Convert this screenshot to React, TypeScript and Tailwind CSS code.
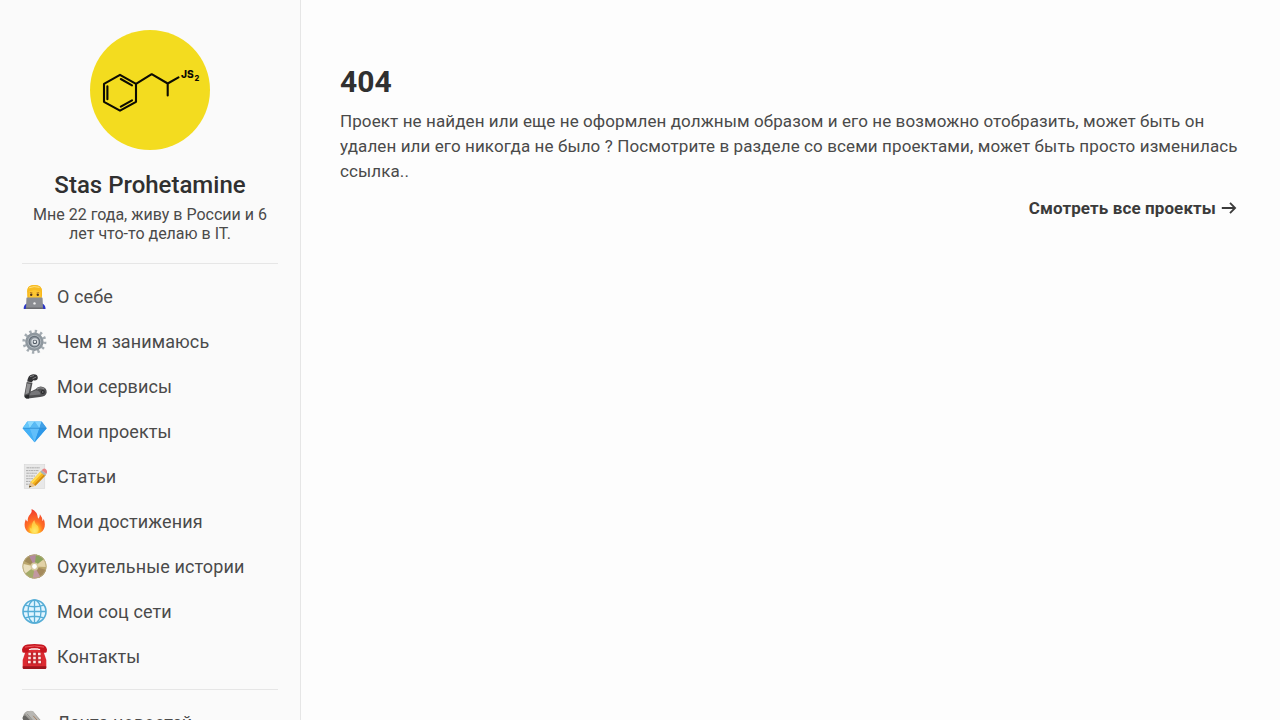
import React from "react";

const Developer = () => (
  <svg viewBox="0 0 25 25" className="size-[25px] shrink-0">
    <path d="M1.7 25 Q1.5 20.5 5 19.5 H20 Q23.5 20.5 23.6 25Z" fill="#2a35c8" />
    <path d="M5.2 9 Q4.8 2 10 1.2 Q19.8 -.2 20 7 V12 Q20 18 12.5 18 Q5.2 18 5.2 12Z" fill="#f9b81a" />
    <path d="M6.8 7 Q10 7 12 5.6 Q15 7 18.6 7 V15 H6.8Z" fill="#fdc733" />
    <path d="M5.2 8 Q4.8 2 10 1.2 Q19.8 -.2 20 7.6 L18.8 8 Q18 5.8 15 5.8 Q9 6.6 7.2 5.6 L6.3 8.6Z" fill="#f7bc23" />
    <path d="M7 3.8 Q12 1.6 17.5 3.4" fill="none" stroke="#ffe07a" strokeWidth="1" />
    <path d="M7.8 8.4 L10.4 8.8 M14.6 8.8 L17.2 8.4" stroke="#b5711a" strokeWidth=".8" />
    <circle cx="9.2" cy="10.7" r="1.2" fill="#54351a" /><circle cx="15.8" cy="10.7" r="1.2" fill="#54351a" />
    <path d="M5.2 13.5 H19.8 Q20.6 13.5 20.6 14.5 L21 25 H4 L4.4 14.5 Q4.4 13.5 5.2 13.5Z" fill="#8b8d92" />
    <path d="M4 23.6 H21 L21.3 25 H3.7Z" fill="#6c6d71" /><circle cx="12.5" cy="19.4" r="1.2" fill="#eee" />
  </svg>
);

const Gear = () => (
  <svg viewBox="0 0 25 25" className="size-[25px] shrink-0">
    <circle cx="12.4" cy="12.7" r="10.4" fill="none" stroke="#a3abb1" strokeWidth="3.2" strokeDasharray="2.3 3.145" />
    <circle cx="12.4" cy="12.7" r="8" fill="#b2b9bf" stroke="#8e979e" strokeWidth="2.4" />
    <circle cx="12.4" cy="12.7" r="5.3" fill="#8b949c" stroke="#66707a" strokeWidth="1.2" />
    <circle cx="12.9" cy="12.9" r="2.9" fill="#46505a" stroke="#d3d8dd" strokeWidth="1.4" />
    <circle cx="12.9" cy="12.7" r="1.3" fill="#edf0f3" />
  </svg>
);

const Arm = () => (
  <svg viewBox="0 0 25 25" className="size-[25px] shrink-0">
    <path d="M4.7 8 L10.5 8.8 L8.7 17.5 L13.5 15.3 Q16 12 20 12.7 Q25 14 24.7 18.5 Q24 22.5 18 23 L6 24.5 Q1.8 24.5 2.3 21Z" fill="#505052" />
    <path d="M5 9.5 L8.7 10 L6.7 19 L3.3 20.5Z" fill="#929294" />
    <path d="M9 18.3 L14 16.2 Q18 16.5 18.5 20.4 L7 21.5Z" fill="#77777a" />
    <path d="M15 15.2 Q18 12.8 22.4 15" fill="none" stroke="#8c8c8e" strokeWidth="1.2" />
    <path d="M5.2 7.6 Q6 1 10 .4 Q15.8 -.2 15.8 3.8 Q15.5 7 11.4 6.3 L9.7 8.3Z" fill="#333335" />
    <path d="M8 2.7 L12 1.5 M10.5 4.8 L14.3 3" stroke="#858587" strokeWidth="1" />
    <circle cx="20.8" cy="18" r="2" fill="#29292b" /><circle cx="20.8" cy="18" r=".7" fill="#999" />
    <path d="M2.5 21.8 L7.3 20.5 L7 24.4 H4Z" fill="#292a2c" />
  </svg>
);

const Diamond = () => (
  <svg viewBox="0 0 25 25" className="size-[25px] shrink-0">
    <path d="M5.3 2.4 H19.6 L24.7 9.3 L12.6 23.3 L.6 9.3Z" fill="#36a5ef" />
    <path d="M.6 9.3 L5.3 2.4 L7.7 9.3Z" fill="#65c7fb" />
    <path d="M5.3 2.4 H12.6 L7.7 9.3Z" fill="#8cdbff" />
    <path d="M12.6 2.4 L17.4 9.3 H7.7Z" fill="#59baf4" />
    <path d="M12.6 2.4 H19.6 L17.4 9.3Z" fill="#83d4ff" />
    <path d="M19.6 2.4 L24.7 9.3 H17.4Z" fill="#419fe6" />
    <path d="M.6 9.3 H7.7 L12.6 23.3Z" fill="#45b1f6" />
    <path d="M7.7 9.3 H17.4 L12.6 23.3Z" fill="#62bffa" />
    <path d="M17.4 9.3 H24.7 L12.6 23.3Z" fill="#2d97e8" />
    <path d="M1.2 9.3 H24" stroke="#2e8cd0" strokeWidth=".7" />
  </svg>
);

const Memo = () => (
  <svg viewBox="0 0 25 25" className="size-[25px] shrink-0">
    <rect x="2.2" y=".4" width="20.6" height="24.3" fill="#e8e8e8" stroke="#d3d3d3" strokeWidth=".5" />
    <path d="M4.5 3.8 H18 M4 6.6 H17 M4.4 9.2 H15 M4 12 H13 M4.2 14.7 H11 M4 17.4 H8.5 M4 20.2 H8" stroke="#9c9c9c" strokeWidth=".8" strokeDasharray="2.5 .5 1.5 .4" />
    <path d="M7 23.5 L8.6 18 L18.5 7.5 L23.6 11.2 L13.5 21.7Z" fill="#f6b51e" />
    <path d="M8.8 18 L18.5 7.6 L20.2 8.9 L10.4 19.3Z" fill="#ffdc54" />
    <path d="M13.4 21.7 L12.1 20.5 L22.3 10.2 L23.6 11.2Z" fill="#d28a14" />
    <path d="M7 23.5 L8.6 18 L13.5 21.7Z" fill="#e9c594" /><path d="M7 23.5 L7.6 21.4 L9.5 22.6Z" fill="#333" />
    <path d="M18.2 7.9 L19.7 6.3 L24.5 10 L22.9 11.7Z" fill="#abb4b9" />
    <path d="M19.7 6.3 L20.7 5.2 Q22.5 3.9 24.1 5.5 Q25.6 7.3 24.9 8.8 L24.5 10Z" fill="#e78284" />
  </svg>
);

const Fire = () => (
  <svg viewBox="0 0 25 25" className="size-[25px] shrink-0">
    <defs><radialGradient id="flame" cx=".5" cy=".88" r=".8"><stop offset="0" stopColor="#fff58a" /><stop offset=".25" stopColor="#ffbd21" /><stop offset=".5" stopColor="#ff7124" /><stop offset="1" stopColor="#f2402d" /></radialGradient></defs>
    <path d="M9.6 0 Q15.4 2.3 16.1 9.7 Q18 8.3 17.9 5.2 Q20.5 8.4 20.5 12 Q21.5 11.5 21.7 9.8 C24.5 17 22.5 24.8 12.8 24.9 C3.5 25 .7 17.5 3.8 10.2 Q4.5 12 5.7 12.5 Q5.4 8 8.2 5.3 Q10.3 3.2 9.6 0Z" fill="url(#flame)" />
    <path d="M12.3 11 Q12.8 15 16 17.2 Q18.3 23.6 12.8 24 Q7 24 7.8 18.2 Q8.6 19.6 9.7 19.8 Q9.3 14.3 12.3 11Z" fill="#ffe25c" opacity=".65" />
  </svg>
);

const Disc = () => (
  <svg viewBox="0 0 25 25" className="size-[25px] shrink-0">
    <circle cx="12.5" cy="12.5" r="12" fill="#bba66c" />
    <path d="M12.5 12.5 L2 7 Q5 1.5 10 .8Z" fill="#a08a58" />
    <path d="M12.5 12.5 L7 2 Q11 -.2 14.5 .7Z" fill="#b28a9d" />
    <path d="M12.5 12.5 L14 .6 Q20 1.5 22.8 6.4Z" fill="#8ba35c" />
    <path d="M12.5 12.5 L22 5 Q25 9 24.5 13Z" fill="#e2d2a6" />
    <path d="M12.5 12.5 L24 16 Q22 22 17 23.7Z" fill="#a48a5c" />
    <path d="M12.5 12.5 L18.5 23 Q14 25 10.3 24.3Z" fill="#c298a0" />
    <path d="M12.5 12.5 L10.8 24.4 Q5.5 23.5 3 19Z" fill="#a3ab68" />
    <path d="M12.5 12.5 L3 19.7 Q0 15 .6 9.7Z" fill="#eadfbd" />
    <circle cx="12.5" cy="12.5" r="11.6" fill="none" stroke="#b5a77a" strokeWidth=".8" />
    <circle cx="12.5" cy="12.5" r="4" fill="#d5c89e" /><circle cx="12.5" cy="12.5" r="2.4" fill="#fff" />
  </svg>
);

const Globe = () => (
  <svg viewBox="0 0 25 25" className="size-[25px] shrink-0" fill="none" stroke="#55add6">
    <circle cx="12.5" cy="12.5" r="11.5" fill="#e1f5ff" strokeWidth="1.6" />
    <path d="M12.5 1 V24 M1 12.5 H24 M3.2 6.2 Q12.5 9.3 21.8 6.2 M3.2 18.8 Q12.5 15.7 21.8 18.8" strokeWidth="1.3" />
    <ellipse cx="12.5" cy="12.5" rx="6.5" ry="11.5" strokeWidth="1.3" />
  </svg>
);

const Phone = () => (
  <svg viewBox="0 0 25 25" className="size-[25px] shrink-0">
    <path d="M4 6 H21 L24.3 16 V24 Q24 25 23 25 H2 Q.8 25 .7 24 V16Z" fill="#dc2a31" />
    <path d="M.8 22.3 H24.2 V24 Q24 25 23 25 H2 Q.8 25 .8 24Z" fill="#9e151d" />
    <path d="M0 5.4 Q1 1.2 5.5 .6 Q12.5 -.4 19.5 .6 Q24 1.2 25 5.4 L24.6 8.2 Q22 9.4 18.5 8 L18 5 Q12.5 3.7 7 5 L6.5 8 Q3 9.4 .4 8.2Z" fill="#c6151f" />
    <path d="M3 3.1 Q12.5 .8 22 3.1" stroke="#ee5b5e" strokeWidth="1" fill="none" />
    <path d="M8.8 4.3 H16.2 V6 H8.8Z" fill="#f2c3c4" />
    <path d="M6.2 8 H18.8 L20 20.4 H5Z" fill="#c4232b" />
    <path d="M6.4 10 H8.9 M11.2 10 H13.8 M16 10 H18.6 M6.2 14 H8.8 M11.2 14 H13.8 M16.2 14 H18.8 M6 18 H8.7 M11.2 18 H13.8 M16.3 18 H19" stroke="#fbe9e7" strokeWidth="2.4" />
  </svg>
);

const Newspaper = () => (
  <svg viewBox="0 0 25 25" className="size-[25px] shrink-0">
    <path d="M1 6.5 Q2.5 1 7 1 L10.8 1 L24.5 17 L18 24 L3 12Z" fill="#9b9994" />
    <path d="M3 3.5 Q6 -.2 10.8 1 L17.5 10 L13 13Z" fill="#b8b7b3" />
    <path d="M.4 8 Q1 5 3.2 5.5 L11 13 L11 18 L2 12Z" fill="#686764" />
    <path d="M11.2 5.8 L16.8 12" stroke="#a58063" strokeWidth="1" />
    <path d="M5 3.8 L12 12" stroke="#888781" strokeWidth=".8" />
  </svg>
);

const menu = [
  { Icon: Developer, label: "О себе" },
  { Icon: Gear, label: "Чем я занимаюсь" },
  { Icon: Arm, label: "Мои сервисы" },
  { Icon: Diamond, label: "Мои проекты" },
  { Icon: Memo, label: "Статьи" },
  { Icon: Fire, label: "Мои достижения" },
  { Icon: Disc, label: "Охуительные истории" },
  { Icon: Globe, label: "Мои соц сети" },
  { Icon: Phone, label: "Контакты" },
];

const Logo = () => (
  <svg viewBox="0 0 120 120" className="size-[120px] shrink-0">
    <circle cx="60" cy="60" r="60" fill="#f3dc1f" />
    <g fill="none" stroke="#0c0b02" strokeWidth="2.1" strokeLinecap="round" strokeLinejoin="round">
      <path d="M30 44.8 L46 53.8 V71.8 L30 80.7 L14 71.8 V53.8Z" />
      <path d="M17.4 56.3 V69.3 M30.8 49 L42 55.3 M30.8 76.6 L42 70.3" />
      <path d="M46 53.8 L61.7 44.2 L77.7 53.5 L88.5 47.4 M77.7 53.5 V65.5" />
    </g>
    <text x="91" y="48.2" fontFamily="Inter, sans-serif" fontWeight="800" fontSize="10.2" fill="#0c0b02">JS</text>
    <text x="104.5" y="51.2" fontFamily="Inter, sans-serif" fontWeight="800" fontSize="7.5" fill="#0c0b02">2</text>
  </svg>
);

export default function App() {
  return (
    <div className="flex h-screen overflow-hidden bg-[#fdfdfd] font-['Roboto',sans-serif] text-[#4a4a4a]">
      <aside className="flex w-[301px] shrink-0 flex-col border-r border-[#e6e6e6] bg-[#fafafa] px-[22px] pt-[30px]">
        <header className="flex flex-col items-center border-b border-[#e6e6e6] pb-5 text-center">
          <Logo />
          <h1 className="mt-5 text-2xl leading-[30px] font-medium text-[#303030]">Stas Prohetamine</h1>
          <p className="mt-[5px] w-[240px] text-base leading-[19px]">Мне 22 года, живу в России и 6 лет что-то делаю в IT.</p>
        </header>
        <nav className="border-b border-[#e6e6e6] pt-[10px] pb-[10px]">
          {menu.map(({ Icon, label }) => (
            <a key={label} className="flex h-[45px] items-center gap-[10px] text-lg tracking-[0.1px]">
              <Icon />
              <span>{label}</span>
            </a>
          ))}
        </nav>
        <nav className="pt-[10px]">
          <a className="flex h-[45px] items-center gap-[10px] text-lg tracking-[0.1px]">
            <Newspaper />
            <span>Лента новостей</span>
          </a>
        </nav>
      </aside>
      <main className="flex-1 pt-[62px] pr-[42px] pl-[39px]">
        <h2 className="text-[30px] leading-10 font-bold tracking-[0.1px] text-[#303030]">404</h2>
        <p className="mt-[7px] text-[17px] leading-[25px] tracking-[0.1px]">
          Проект не найден или еще не оформлен должным образом и его не возможно отобразить, может быть он удален или его никогда не было ? Посмотрите в разделе со всеми проектами, может быть просто изменилась ссылка..
        </p>
        <a className="mt-3 flex items-center justify-end gap-[5px] pr-px text-[17px] leading-[25px] font-bold tracking-[0.1px] text-[#3b3b3b]">
          Смотреть все проекты
          <svg viewBox="0 0 16 14" className="mb-0.5 h-[14px] w-4" fill="none" stroke="#3b3b3b" strokeWidth="1.8">
            <path d="M.8 7 H14 M9 1.9 L14.1 7 L9 12.1" />
          </svg>
        </a>
      </main>
    </div>
  );
}
